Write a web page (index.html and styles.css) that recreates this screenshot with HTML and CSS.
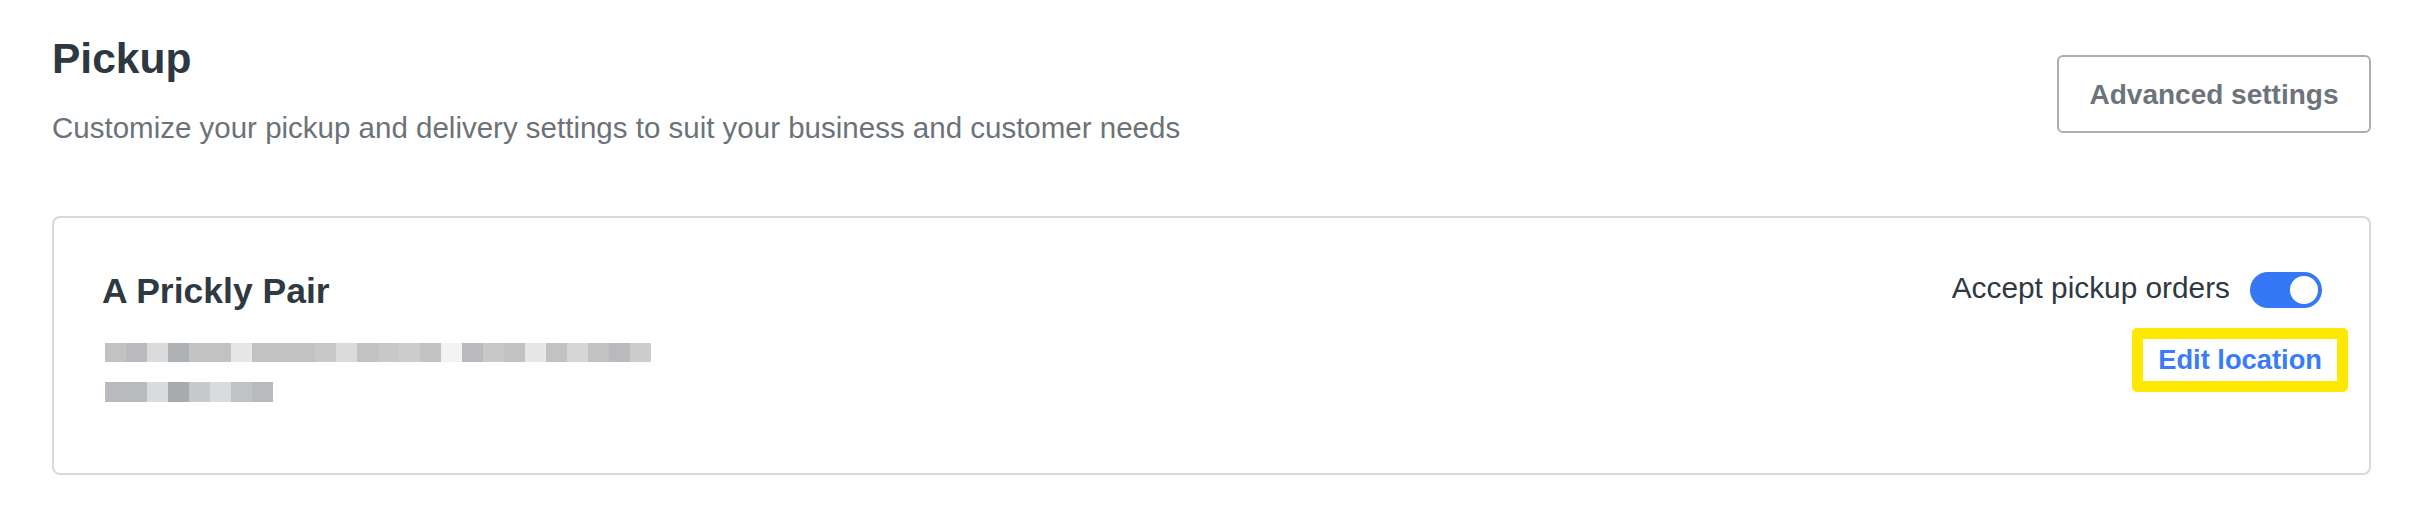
FILE: index.html
```html
<!DOCTYPE html>
<html lang="en">
<head>
<meta charset="utf-8">
<title>Pickup</title>
<link rel="stylesheet" href="styles.css">
</head>
<body>
<main class="page">
  <header class="page-header">
    <div class="heading">
      <h1 class="title">Pickup</h1>
      <p class="subtitle">Customize your pickup and delivery settings to suit your business and customer needs</p>
    </div>
    <button class="btn-secondary" type="button">Advanced settings</button>
  </header>

  <section class="card">
    <div class="location">
      <h2 class="location-name">A Prickly Pair</h2>
      <div class="redacted">
        <div class="redacted-line">
          <span class="px c"></span><span class="px b"></span><span class="px e"></span><span class="px a2"></span><span class="px c"></span><span class="px c"></span><span class="px f"></span><span class="px c"></span><span class="px c"></span><span class="px c"></span><span class="px d"></span><span class="px e"></span><span class="px c"></span><span class="px d"></span><span class="px d2"></span><span class="px c"></span><span class="px g"></span><span class="px b"></span><span class="px d"></span><span class="px c"></span><span class="px f"></span><span class="px c"></span><span class="px e2"></span><span class="px c"></span><span class="px b"></span><span class="px d2"></span>
        </div>
        <div class="redacted-line second">
          <span class="px b"></span><span class="px b"></span><span class="px e"></span><span class="px a"></span><span class="px d"></span><span class="px e"></span><span class="px c"></span><span class="px b"></span>
        </div>
      </div>
    </div>
    <div class="controls">
      <label class="toggle-row">
        <span class="toggle-label">Accept pickup orders</span>
        <span class="toggle on"><span class="knob"></span></span>
      </label>
      <a class="link highlight" href="#">Edit location</a>
    </div>
  </section>
</main>
</body>
</html>
```

FILE: styles.css
```css
* {
  box-sizing: border-box;
}

html, body {
  margin: 0;
  padding: 0;
  background: #ffffff;
}

body {
  font-family: "Liberation Sans", Arial, sans-serif;
  color: #2e3941;
}

.page {
  padding: 35px 52px 0 52px;
}

.page-header {
  display: flex;
  justify-content: space-between;
  align-items: flex-start;
}

.title {
  margin: 0;
  font-size: 42.5px;
  line-height: 48px;
  font-weight: 700;
  color: #2d3840;
}

.subtitle {
  margin: 25px 0 0 0;
  font-size: 29.5px;
  line-height: 40px;
  color: #6b7379;
}

.btn-secondary {
  margin-top: 20px;
  height: 78px;
  width: 314px;
  padding: 1px 0 0 0;
  border: 2px solid #a9aeb3;
  border-radius: 6px;
  background: #ffffff;
  font-family: "Liberation Sans", Arial, sans-serif;
  font-size: 28px;
  font-weight: 700;
  color: #6d737a;
  display: flex;
  align-items: center;
  justify-content: center;
}

.card {
  margin-top: 68px;
  border: 2px solid #d6dadd;
  border-radius: 8px;
  padding: 49px 47px 71px 48px;
  display: flex;
  justify-content: space-between;
  align-items: flex-start;
}

.location-name {
  margin: 0;
  font-size: 35.5px;
  line-height: 48px;
  font-weight: 700;
  color: #2e3941;
}

.redacted {
  margin: 28px 0 0 3px;
  display: flex;
  flex-direction: column;
  gap: 20px;
}

.redacted-line {
  display: flex;
  height: 19px;
}

.redacted-line.second {
  height: 20px;
}

.px {
  width: 21px;
  height: 100%;
}

.px.a  { background: #a8acaf; }
.px.a2 { background: #aeb1b4; }
.px.b  { background: #b8babd; }
.px.c  { background: #c0c2c4; }
.px.d  { background: #c6c8ca; }
.px.d2 { background: #cbcdcf; }
.px.e  { background: #d9dbdd; }
.px.e2 { background: #d4d6d8; }
.px.f  { background: #e6e7e8; }
.px.g  { background: #f2f3f4; }

.controls {
  display: flex;
  flex-direction: column;
  align-items: flex-end;
  padding-top: 5px;
}

.toggle-row {
  display: flex;
  align-items: flex-start;
  gap: 20px;
}

.toggle-label {
  font-size: 29.8px;
  line-height: 32px;
  color: #2e3941;
}

.toggle {
  width: 72px;
  height: 36px;
  border-radius: 18px;
  background: #3478f6;
  display: flex;
  align-items: center;
  justify-content: flex-end;
  padding: 0 4px;
}

.knob {
  width: 28px;
  height: 28px;
  border-radius: 50%;
  background: #ffffff;
}

.link {
  font-size: 27.3px;
  line-height: 42px;
  font-weight: 700;
  color: #3a7cf5;
  text-decoration: none;
}

.highlight {
  margin-top: 20px;
  margin-right: -26px;
  padding: 0 15px;
  border: 11px solid #ffe700;
  border-radius: 5px;
  background: #ffffff;
}
```
